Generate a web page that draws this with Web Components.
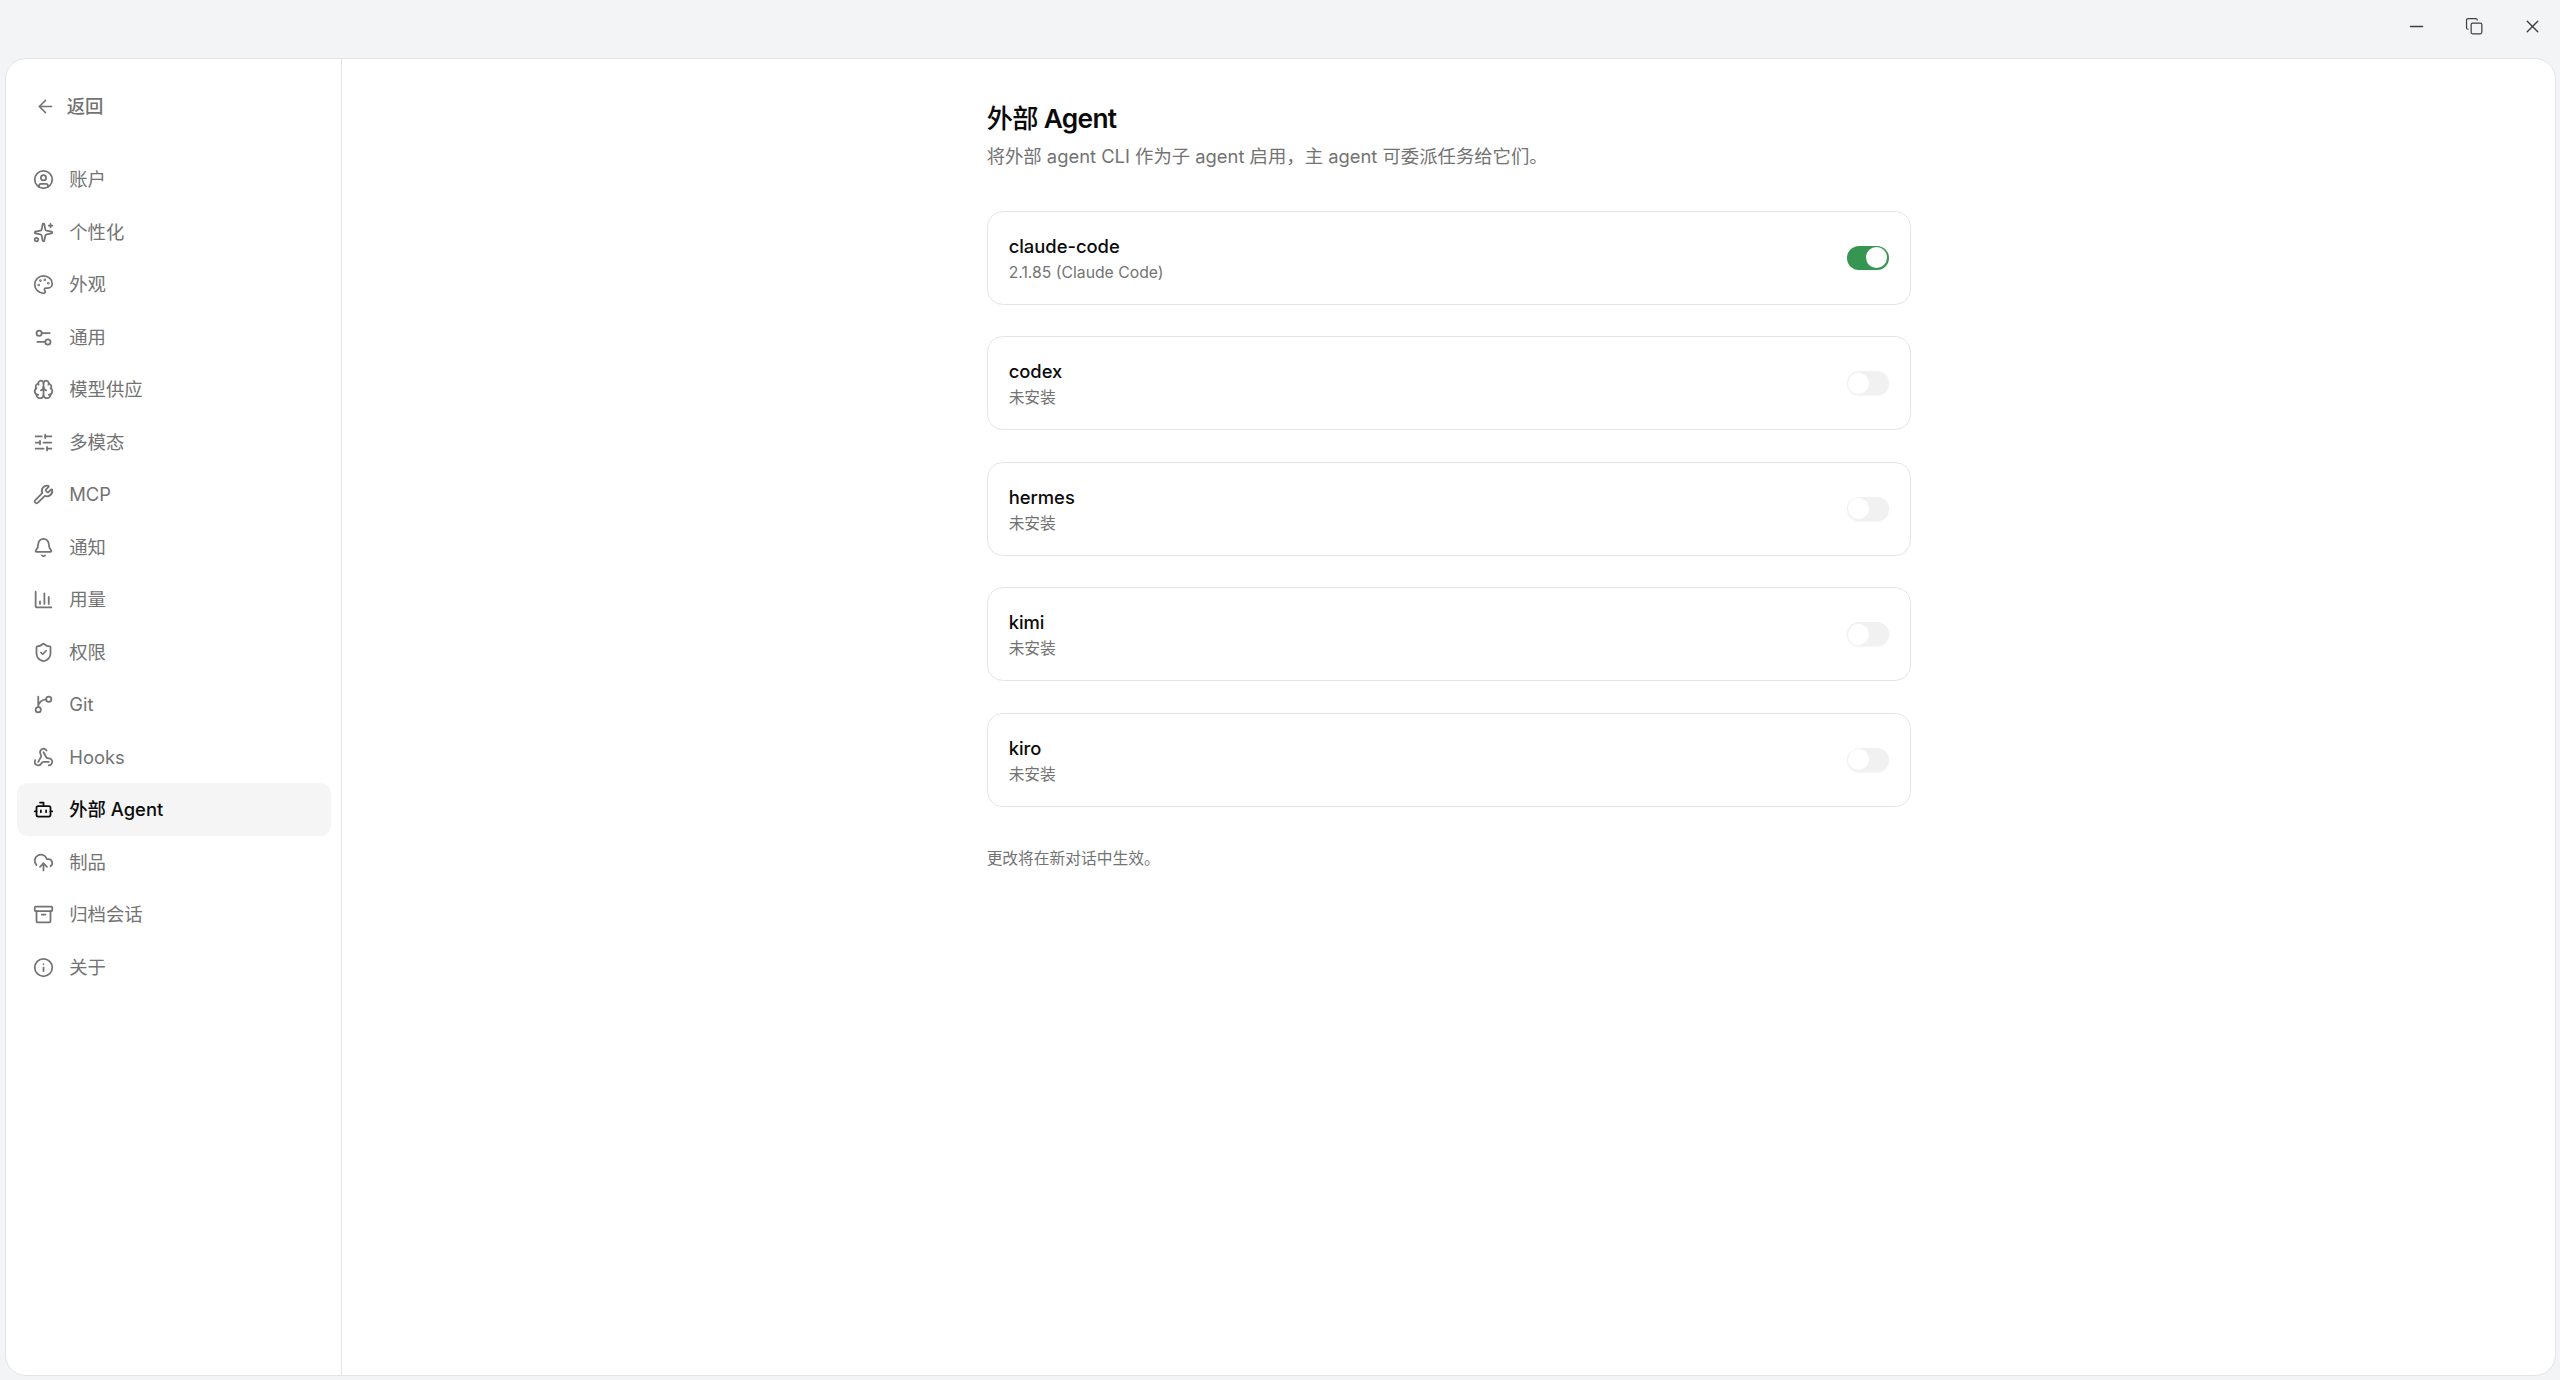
<!DOCTYPE html>
<html lang="zh-CN">
<head>
<meta charset="utf-8">
<title>外部 Agent</title>
<style>
  /* 1rem = 10 design units */
  html { font-size: 13.125px; height: 100%; }
  body { margin: 0; height: 100%; overflow: hidden; background: #f3f4f6; color: #0a0a0a; font-family: Inter, "Noto Sans CJK SC", sans-serif; }
  .han { font-weight: 500; }
</style>
</head>
<body>
<app-window>
  <side-bar slot="sidebar">
    <nav-item icon="user">账户</nav-item>
    <nav-item icon="sparkles">个性化</nav-item>
    <nav-item icon="palette">外观</nav-item>
    <nav-item icon="settings">通用</nav-item>
    <nav-item icon="brain">模型供应</nav-item>
    <nav-item icon="sliders">多模态</nav-item>
    <nav-item icon="wrench">MCP</nav-item>
    <nav-item icon="bell">通知</nav-item>
    <nav-item icon="chart">用量</nav-item>
    <nav-item icon="shield">权限</nav-item>
    <nav-item icon="branch">Git</nav-item>
    <nav-item icon="webhook">Hooks</nav-item>
    <nav-item icon="bot" active>外部 Agent</nav-item>
    <nav-item icon="cloud">制品</nav-item>
    <nav-item icon="archive">归档会话</nav-item>
    <nav-item icon="info">关于</nav-item>
  </side-bar>
  <settings-page>
    <span slot="title"><span class="han">外部</span> Agent</span>
    <span slot="subtitle">将外部 agent CLI 作为子 agent 启用，主 agent 可委派任务给它们。</span>
    <agent-card name="claude-code" on>2.1.85 (Claude Code)</agent-card>
    <agent-card name="codex">未安装</agent-card>
    <agent-card name="hermes">未安装</agent-card>
    <agent-card name="kimi">未安装</agent-card>
    <agent-card name="kiro">未安装</agent-card>
    <span slot="note">更改将在新对话中生效。</span>
  </settings-page>
</app-window>
<script>
const ICONS = {
  back: '<path d="m12 19-7-7 7-7"/><path d="M19 12H5"/>',
  minus: '<path d="M5 12h14"/>',
  copy: '<rect width="14" height="14" x="8" y="8" rx="2"/><path d="M4 16c-1.1 0-2-.9-2-2V4c0-1.1.9-2 2-2h10c1.1 0 2 .9 2 2"/>',
  close: '<path d="M18 6 6 18"/><path d="m6 6 12 12"/>',
  user: '<circle cx="12" cy="12" r="10"/><circle cx="12" cy="10" r="3"/><path d="M7 20.662V19a2 2 0 0 1 2-2h6a2 2 0 0 1 2 2v1.662"/>',
  sparkles: '<path d="M11.017 2.814a1 1 0 0 1 1.966 0l1.051 5.558a2 2 0 0 0 1.594 1.594l5.558 1.051a1 1 0 0 1 0 1.966l-5.558 1.051a2 2 0 0 0-1.594 1.594l-1.051 5.558a1 1 0 0 1-1.966 0l-1.051-5.558a2 2 0 0 0-1.594-1.594l-5.558-1.051a1 1 0 0 1 0-1.966l5.558-1.051a2 2 0 0 0 1.594-1.594z"/><path d="M20 2v4"/><path d="M22 4h-4"/><circle cx="4" cy="20" r="2"/>',
  palette: '<path d="M12 22a1 1 0 0 1 0-20 10 9 0 0 1 10 9 5 5 0 0 1-5 5h-2.25a1.75 1.75 0 0 0-1.4 2.8l.3.4a1.75 1.75 0 0 1-1.4 2.8z"/><g fill="currentColor"><circle cx="13.5" cy="6.5" r=".5"/><circle cx="17.5" cy="10.5" r=".5"/><circle cx="6.5" cy="12.5" r=".5"/><circle cx="8.5" cy="7.5" r=".5"/></g>',
  settings: '<path d="M14 17H5"/><path d="M19 7h-9"/><circle cx="17" cy="17" r="3"/><circle cx="7" cy="7" r="3"/>',
  brain: '<path d="M12 18V5"/><path d="M15 13a4.17 4.17 0 0 1-3-4 4.17 4.17 0 0 1-3 4"/><path d="M17.598 6.5A3 3 0 1 0 12 5a3 3 0 1 0-5.598 1.5"/><path d="M17.997 5.125a4 4 0 0 1 2.526 5.77"/><path d="M18 18a4 4 0 0 0 2-7.464"/><path d="M19.967 17.483A4 4 0 1 1 12 18a4 4 0 1 1-7.967-.517"/><path d="M6 18a4 4 0 0 1-2-7.464"/><path d="M6.003 5.125a4 4 0 0 0-2.526 5.77"/>',
  sliders: '<path d="M10 5H3"/><path d="M12 19H3"/><path d="M14 3v4"/><path d="M16 17v4"/><path d="M21 12h-9"/><path d="M21 19h-5"/><path d="M21 5h-7"/><path d="M8 10v4"/><path d="M8 12H3"/>',
  wrench: '<path d="M14.7 6.3a1 1 0 0 0 0 1.4l1.6 1.6a1 1 0 0 0 1.4 0l3.106-3.105c.32-.322.863-.22.983.218a6 6 0 0 1-8.259 7.057l-7.91 7.91a1 1 0 0 1-2.999-3l7.91-7.91a6 6 0 0 1 7.057-8.259c.438.12.54.662.219.984z"/>',
  bell: '<path d="M10.268 21a2 2 0 0 0 3.464 0"/><path d="M3.262 15.326A1 1 0 0 0 4 17h16a1 1 0 0 0 .74-1.673C19.41 13.956 18 12.499 18 8A6 6 0 0 0 6 8c0 4.499-1.411 5.956-2.738 7.326"/>',
  chart: '<path d="M3 3v16a2 2 0 0 0 2 2h16"/><path d="M18 17V9"/><path d="M13 17V5"/><path d="M8 17v-3"/>',
  shield: '<path d="M20 13c0 5-3.5 7.5-7.66 8.95a1 1 0 0 1-.67-.01C7.5 20.5 4 18 4 13V6a1 1 0 0 1 1-1c2 0 4.5-1.2 6.24-2.72a1.17 1.17 0 0 1 1.52 0C14.51 3.81 17 5 19 5a1 1 0 0 1 1 1z"/><path d="m9 12 2 2 4-4"/>',
  branch: '<path d="M15 6a9 9 0 0 0-9 9V3"/><circle cx="18" cy="6" r="3"/><circle cx="6" cy="18" r="3"/>',
  webhook: '<path d="M18 16.98h-5.99c-1.1 0-1.95.94-2.48 1.9A4 4 0 0 1 2 17c.01-.7.2-1.4.57-2"/><path d="m6 17 3.13-5.78c.53-.97.1-2.18-.5-3.1a4 4 0 1 1 6.89-4.06"/><path d="m12 6 3.13 5.73C15.66 12.7 16.9 13 18 13a4 4 0 0 1 0 8"/>',
  bot: '<path d="M12 8V4H8"/><rect width="16" height="12" x="4" y="8" rx="2"/><path d="M2 14h2"/><path d="M20 14h2"/><path d="M15 13v2"/><path d="M9 13v2"/>',
  cloud: '<path d="M12 13v8"/><path d="M4 14.899A7 7 0 1 1 15.71 8h1.79a4.5 4.5 0 0 1 2.5 8.242"/><path d="m8 17 4-4 4 4"/>',
  archive: '<rect width="20" height="5" x="2" y="3" rx="1"/><path d="M4 8v11a2 2 0 0 0 2 2h12a2 2 0 0 0 2-2V8"/><path d="M10 12h4"/>',
  info: '<circle cx="12" cy="12" r="10"/><path d="M12 16v-4"/><path d="M12 8h.01"/>'
};

function define(name, render) {
  customElements.define(name, class extends HTMLElement {
    connectedCallback() {
      if (!this.shadowRoot) this.attachShadow({ mode: 'open' }).innerHTML = render(this);
    }
  });
}

define('line-icon', el => `
  <style>
    :host { display: block; flex: none; width: 1.6rem; height: 1.6rem; }
    svg { display: block; width: 100%; height: 100%; fill: none; stroke: currentColor; stroke-width: var(--stroke, 2); stroke-linecap: round; stroke-linejoin: round; }
  </style>
  <svg viewBox="0 0 24 24">${ICONS[el.getAttribute('name')]}</svg>`);

define('app-window', () => `
  <style>
    :host { display: flex; flex-direction: column; height: 100%; }
    header { display: flex; justify-content: flex-end; height: 4rem; color: #3f3f3f; flex: none; }
    .control { display: flex; align-items: center; justify-content: center; width: 4.4rem; padding-left: 2px; --stroke: 1.6; box-sizing: border-box; }
    .control .small { width: 1.4rem; height: 1.4rem; }
    .frame { flex: 1; min-height: 0; display: flex; padding: .4rem 4.4px 4.4px .4rem; }
    .panel { flex: 1; display: flex; background: #fff; border: 1px solid #e3e4e6; border-radius: 1.6rem; overflow: hidden; }
    main { flex: 1; min-width: 0; }
  </style>
  <header>
    <div class="control"><line-icon name="minus"></line-icon></div>
    <div class="control"><line-icon class="small" name="copy"></line-icon></div>
    <div class="control"><line-icon name="close"></line-icon></div>
  </header>
  <div class="frame"><div class="panel">
    <slot name="sidebar"></slot>
    <main><slot></slot></main>
  </div></div>`);

define('side-bar', () => `
  <style>
    :host { display: flex; flex-direction: column; box-sizing: border-box; flex: none; width: 336px; padding: 1.6rem .8rem; border-right: 1px solid #e5e5e5; }
    .back { display: flex; align-items: center; gap: .8rem; height: 4rem; padding-left: 1.4rem; margin-bottom: 1.6rem; color: #737373; font-size: 1.4rem; line-height: 2rem; font-weight: 500; --stroke: 1.75; }
    nav { display: flex; flex-direction: column; }
  </style>
  <div class="back"><line-icon name="back"></line-icon><span>返回</span></div>
  <nav><slot></slot></nav>`);

define('nav-item', el => `
  <style>
    :host { display: flex; align-items: center; gap: 1.2rem; height: 4rem; padding: 0 1.2rem; border-radius: .8rem; color: #737373; font-size: 1.4rem; line-height: 2rem; }
    :host([active]) { background: #f5f5f5; color: #0a0a0a; font-weight: 500; }
  </style>
  <line-icon name="${el.getAttribute('icon')}"></line-icon><span><slot></slot></span>`);

define('settings-page', () => `
  <style>
    :host { display: flex; flex-direction: column; width: 924px; margin: 0 auto; padding: 3.2rem 0 0 .4px; }
    h1 { margin: 0; font-size: 2rem; line-height: 2.8rem; font-weight: 600; letter-spacing: -.025em; }
    p { margin: 0; color: #737373; font-size: 1.4rem; line-height: 2rem; }
    .sub { margin-top: .4rem; }
    .list { display: flex; flex-direction: column; gap: 31.5px; margin-top: 41.65px; }
    .note { margin-top: 41.2px; font-size: 1.2rem; line-height: 1.6rem; }
  </style>
  <h1><slot name="title"></slot></h1>
  <p class="sub"><slot name="subtitle"></slot></p>
  <div class="list"><slot></slot></div>
  <p class="note"><slot name="note"></slot></p>`);

define('agent-card', el => `
  <style>
    :host { display: flex; align-items: center; justify-content: space-between; box-sizing: border-box; height: 94px; padding: 0 1.6rem; border: 1px solid #e5e5e5; border-radius: 1.2rem; }
    .name { font-size: 1.4rem; line-height: 2rem; font-weight: 500; }
    .state { font-size: 1.2rem; line-height: 1.6rem; margin-top: .2rem; color: #737373; }
  </style>
  <div><div class="name">${el.getAttribute('name')}</div><div class="state"><slot></slot></div></div>
  <toggle-switch ${el.hasAttribute('on') ? 'on' : ''}></toggle-switch>`);

define('toggle-switch', () => `
  <style>
    :host { display: flex; align-items: center; box-sizing: border-box; width: 3.2rem; height: 1.84rem; padding: 0 1px; border-radius: 1rem; background: #f1f1f1; box-shadow: 0 1px 2px rgba(0,0,0,.04); }
    :host([on]) { justify-content: flex-end; background: #349650; padding-right: 1.5px; }
    i { width: 1.6rem; height: 1.6rem; border-radius: 50%; background: #fff; }
  </style>
  <i></i>`);
</script>
</body>
</html>
